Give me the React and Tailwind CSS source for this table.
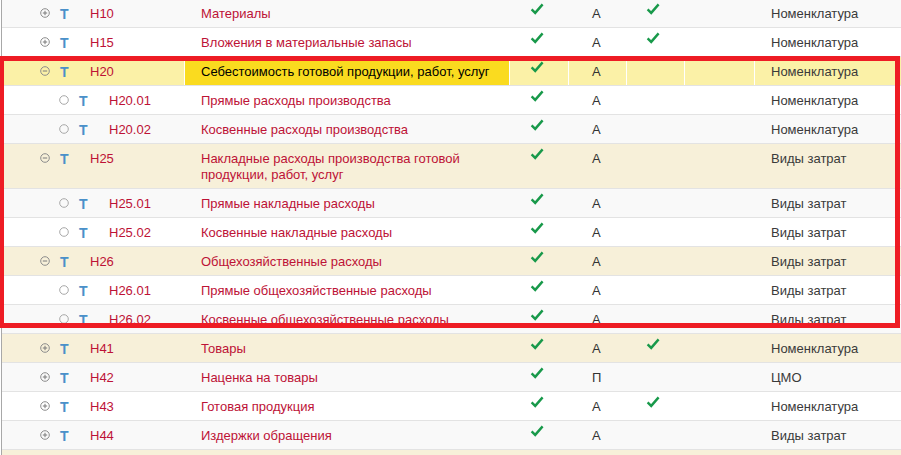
import React from "react";

const rows = [
  { code: "Н10", lvl: 0, icon: "plus", name: "Материалы", c1: true, l: "А", c2: true, type: "Номенклатура", bg: "gray" },
  { code: "Н15", lvl: 0, icon: "plus", name: "Вложения в материальные запасы", c1: true, l: "А", c2: true, type: "Номенклатура", bg: "white" },
  { code: "Н20", lvl: 0, icon: "minus", name: "Себестоимость готовой продукции, работ, услуг", c1: true, l: "А", c2: false, type: "Номенклатура", bg: "sel" },
  { code: "Н20.01", lvl: 1, icon: "circle", name: "Прямые расходы производства", c1: true, l: "А", c2: false, type: "Номенклатура", bg: "white" },
  { code: "Н20.02", lvl: 1, icon: "circle", name: "Косвенные расходы производства", c1: true, l: "А", c2: false, type: "Номенклатура", bg: "gray" },
  { code: "Н25", lvl: 0, icon: "minus", name: "Накладные расходы производства готовой продукции, работ, услуг", c1: true, l: "А", c2: false, type: "Виды затрат", bg: "beige" },
  { code: "Н25.01", lvl: 1, icon: "circle", name: "Прямые накладные расходы", c1: true, l: "А", c2: false, type: "Виды затрат", bg: "gray" },
  { code: "Н25.02", lvl: 1, icon: "circle", name: "Косвенные накладные расходы", c1: true, l: "А", c2: false, type: "Виды затрат", bg: "white" },
  { code: "Н26", lvl: 0, icon: "minus", name: "Общехозяйственные расходы", c1: true, l: "А", c2: false, type: "Виды затрат", bg: "beige" },
  { code: "Н26.01", lvl: 1, icon: "circle", name: "Прямые общехозяйственные расходы", c1: true, l: "А", c2: false, type: "Виды затрат", bg: "white" },
  { code: "Н26.02", lvl: 1, icon: "circle", name: "Косвенные общехозяйственные расходы", c1: true, l: "А", c2: false, type: "Виды затрат", bg: "gray" },
  { code: "Н41", lvl: 0, icon: "plus", name: "Товары", c1: true, l: "А", c2: true, type: "Номенклатура", bg: "beige" },
  { code: "Н42", lvl: 0, icon: "plus", name: "Наценка на товары", c1: true, l: "П", c2: false, type: "ЦМО", bg: "gray" },
  { code: "Н43", lvl: 0, icon: "plus", name: "Готовая продукция", c1: true, l: "А", c2: true, type: "Номенклатура", bg: "white" },
  { code: "Н44", lvl: 0, icon: "plus", name: "Издержки обращения", c1: true, l: "А", c2: false, type: "Виды затрат", bg: "gray" },
  { code: "", lvl: 0, icon: "none", name: "", c1: false, l: "", c2: false, type: "", bg: "beige" },
];

const bgClass = {
  gray: "bg-[#f9f9f9]",
  white: "bg-white",
  beige: "bg-[#f7f0d9]",
  sel: "bg-[#fbf1a7]",
};

function Check() {
  return (
    <svg width="14" height="12" viewBox="0 0 14 12" className="block">
      <path d="M1.6 6.4 L5.2 9.9 L12.6 1.4" fill="none" stroke="#18994a" strokeWidth="2.4" strokeLinejoin="miter" />
    </svg>
  );
}

function TreeIcon({ kind }) {
  if (kind === "none") return <span className="block w-[10px] h-[10px]" />;
  const stroke = kind === "circle" ? "#a8a8a8" : "#8c8c8c";
  return (
    <svg width="10" height="10" viewBox="0 0 10 10" className="block">
      <circle cx="5" cy="5" r="4.3" fill="none" stroke={stroke} strokeWidth="1" />
      {kind !== "circle" && <line x1="2.8" y1="5" x2="7.2" y2="5" stroke="#7a7a7a" strokeWidth="1" />}
      {kind === "plus" && <line x1="5" y1="2.8" x2="5" y2="7.2" stroke="#7a7a7a" strokeWidth="1" />}
    </svg>
  );
}

function Row({ r }) {
  const sel = r.bg === "sel";
  const sep = sel ? "border-r border-white" : "border-r border-transparent";
  const textColor = sel ? "text-black" : "text-[#bd1236]";
  return (
    <div className={`flex items-stretch border-b border-[#e3e3e3] min-h-[28px] ${bgClass[r.bg]}`}>
      <div className={`w-[183px] shrink-0 flex items-start pt-[7px] ${sep} ${r.lvl ? "pl-[57px]" : "pl-[38px]"}`}>
        <span className="w-[20px] shrink-0 pt-[2px]">
          {r.icon !== "none" && <TreeIcon kind={r.icon} />}
        </span>
        <span className="w-[30px] shrink-0 text-[14px] leading-[16px] font-bold text-[#4a90c9]">
          {r.icon !== "none" ? "Т" : ""}
        </span>
        <span className="text-[13px] leading-[16px] text-[#bd1236]">{r.code}</span>
      </div>
      <div className={`w-[325px] shrink-0 ${sep} ${sel ? "bg-[#fadb1f]" : ""} pl-[16px] pr-[8px] pt-[7px] pb-[5px]`}>
        <span className={`text-[13px] leading-[16px] block ${textColor}`}>{r.name}</span>
      </div>
      <div className={`w-[59px] shrink-0 ${sep} pl-[20px] pt-[4px]`}>{r.c1 && <Check />}</div>
      <div className={`w-[58px] shrink-0 ${sep} pl-[23px] pt-[7px] text-[13px] leading-[16px] text-[#333333]`}>{r.l}</div>
      <div className={`w-[58px] shrink-0 ${sep} pl-[19px] pt-[4px]`}>{r.c2 && <Check />}</div>
      <div className={`w-[70px] shrink-0 ${sep}`} />
      <div className="flex-1 pl-[16px] pt-[7px] text-[13px] leading-[16px] text-[#3a3a3a]">{r.type}</div>
    </div>
  );
}

export default function App() {
  return (
    <div
      className="relative w-[901px] h-[455px] overflow-hidden bg-white"
      style={{ fontFamily: '"Liberation Sans", Arial, sans-serif' }}
    >
      <div className="ml-[1px] -mt-[1px] border-l border-[#a8a8a8]">
        {rows.map((r, i) => (
          <Row key={i} r={r} />
        ))}
      </div>
      <div className="absolute left-[-1px] top-[56px] w-[901px] h-[272px] border-[5px] border-[#ee1c24] pointer-events-none" />
    </div>
  );
}
